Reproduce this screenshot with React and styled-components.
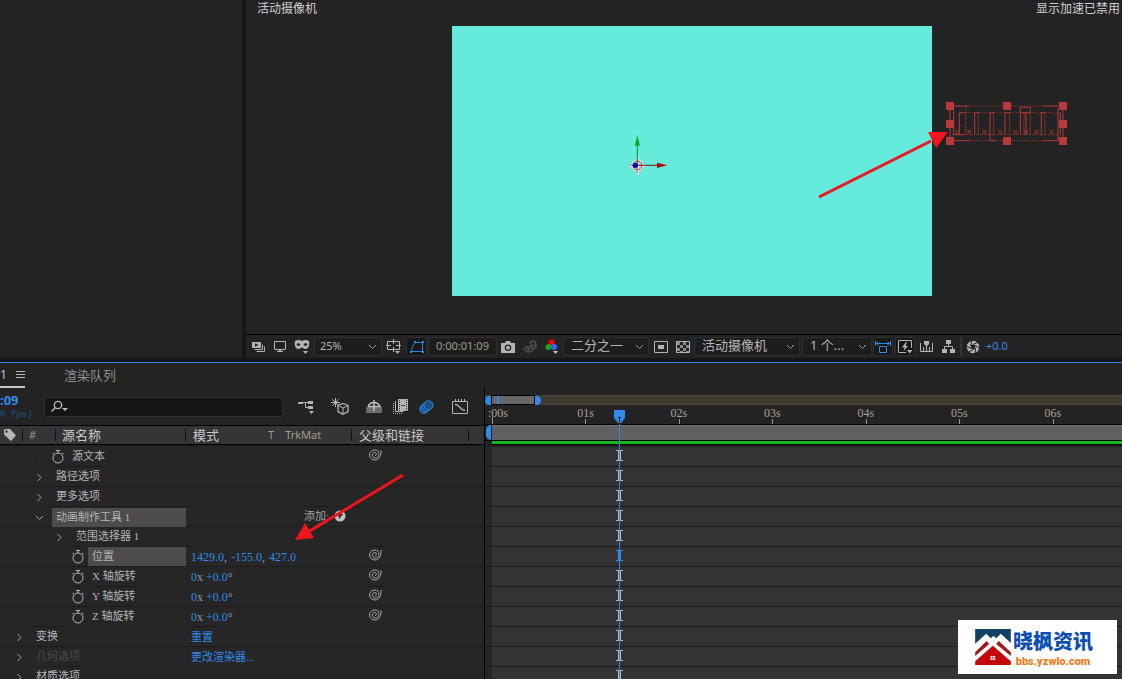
import React, { useState } from 'react';
import styled, { createGlobalStyle } from 'styled-components';

const DURATION = 6.74; // seconds visible in the timeline
const CURRENT_TIME = 1.36;

const GlobalStyle = createGlobalStyle`
* { box-sizing: border-box; }
body {
    margin: 0;
    background: #161616;
    color: #c4c4c4;
    font-family: "Noto Sans", "Noto Sans CJK SC", sans-serif;
    font-size: 12px;
}
button, input, select {
    font: inherit;
    color: inherit;
    margin: 0;
    padding: 0;
    border: 0;
    background: none;
}
svg { display: block; flex: none; }
`

const Window = styled.div`
position: relative;
height: 100vh;
overflow: hidden;
display: flex;
flex-direction: column;
`

/* ---------- upper area ---------- */

const Upper = styled.div`
display: flex;
gap: 4px;
padding-bottom: 4px;
`

const ProjectPanel = styled.section`
width: 242px;
flex: none;
background: #232323;
`

const ViewerPanel = styled.section`
flex: 1;
min-width: 0;
background: #232323;
`

const ViewerHead = styled.header`
display: flex;
justify-content: space-between;
height: 26px;
padding: 0 2px 0 11px;
line-height: 18px;
color: #d0d0d0;
`

const Stage = styled.div`
position: relative;
padding: 0 0 38px 206px;
border-bottom: 1px solid #000;
`

const Composition = styled.div`
width: 480px;
height: 270px;
background: #66eadb;
`

const Gizmo = styled.svg`
position: absolute;
left: 354px;
top: 94px;
`

const TextSelection = styled.svg`
position: absolute;
left: 684px;
top: 59px;
`

const ViewerBar = styled.div`
display: flex;
align-items: center;
height: 23px;
padding-left: 2px;
color: #b4b4b4;
`

const BarButton = styled.button`
display: flex;
align-items: center;
justify-content: center;
flex: none;
width: ${props => props.$w || 22}px;
height: 19px;
margin-left: ${props => props.$gap || 0}px;
border-radius: 3px;
background: ${props => props.$boxed ? '#171717' : 'none'};
border: ${props => props.$boxed ? '1px solid #303030' : '0'};
color: ${props => props.$on ? '#2d8ceb' : '#b4b4b4'};
opacity: ${props => props.$dim ? 0.3 : 1};
`

const SelectBox = styled.label`
position: relative;
display: flex;
align-items: center;
flex: none;
width: ${props => props.$w}px;
height: 19px;
margin-left: ${props => props.$gap || 0}px;
background: #1d1d1d;
border: 1px solid #303030;
border-radius: 3px;

select {
    width: 100%;
    padding-left: ${props => props.$small ? 5 : 7}px;
    padding-bottom: 2px;
    appearance: none;
    outline: none;
    font-size: ${props => props.$small ? 11 : 13}px;
    line-height: 15px;
}
svg {
    position: absolute;
    right: 4px;
    pointer-events: none;
}
`

const TimeButton = styled(BarButton)`
padding-bottom: 2px;
background: #1d1d1d;
border: 1px solid #303030;
color: #a09a92;
font-size: 11px;
`

const Separator = styled.span`
width: 2px;
height: 19px;
margin-left: 2px;
background: #353535;
`

const Exposure = styled.button`
color: #2d8ceb;
font-size: 11px;
padding: 0 0 2px 2px;
`

/* ---------- timeline ---------- */

const Timeline = styled.section`
flex: 1;
min-height: 0;
display: flex;
flex-direction: column;
border-top: 1px solid #2d8ceb;
background: #232323;
`

const Tabs = styled.nav`
display: flex;
height: 25px;
`

const ActiveTab = styled.div`
display: flex;
align-items: center;
gap: 9px;
width: 25px;
border-bottom: 2px solid #c8c8c8;
font-size: 12px;
`

const Tab = styled.button`
margin-left: 39px;
padding-bottom: 3px;
color: #8e8e8e;
font-size: 13px;
`

const TimelineBody = styled.div`
flex: 1;
min-height: 0;
display: grid;
grid-template-columns: 485px 1fr;
`

const LayersPane = styled.div`
border-right: 1px solid #000;
overflow: hidden;
`

const ToolRow = styled.div`
display: flex;
align-items: center;
height: 37px;
`

const CurrentTime = styled.div`
width: 44px;
flex: none;
color: #2d8ceb;
font-size: 13px;
font-weight: 700;
line-height: 16px;

small {
    display: block;
    color: #1c548a;
    font-family: "Liberation Mono", monospace;
    font-size: 9px;
    font-weight: 400;
    line-height: 14px;
    white-space: nowrap;
}
`

const Search = styled.label`
display: flex;
align-items: center;
width: 239px;
height: 20px;
padding-left: 6px;
background: #161616;
border: 1px solid #303030;
border-radius: 3px;

input {
    flex: 1;
    min-width: 0;
    padding-left: 6px;
    outline: none;
}
`

const columns = `186px 165px 1fr`

const ColumnHead = styled.div`
display: grid;
grid-template-columns: 23px 33px 130px 166px 117px 1fr;
align-items: center;
height: 20px;
background: #353535;
border-top: 1px solid #000;
border-bottom: 1px solid #000;
font-size: 13px;
color: #c8c8c8;
`

const HeadCell = styled.div`
display: flex;
align-items: center;
height: 12px;
padding-left: ${props => props.$pad || 7}px;
border-right: 1px solid #111;
line-height: 12px;
white-space: nowrap;

small {
    font-size: 11px;
    color: #a39b92;
}
`

const ModeT = styled.small`
margin-left: 49px;
margin-right: 11px;
`

const Rows = styled.div`
padding-top: 1px;
border-top: 1px solid #1c1c1c;
background: #262626;
`

const Row = styled.div`
display: grid;
grid-template-columns: ${columns};
height: 20px;
border-bottom: 1px solid #1c1c1c;
`

const NameCell = styled.div`
display: flex;
align-items: center;
gap: 4px;
padding-left: ${props => props.$level * 20 + 8}px;
`

const Twirl = styled.button`
display: flex;
align-items: center;
justify-content: center;
width: 20px;
height: 19px;
padding: 2px 0 0 2px;
flex: none;
color: #a8a8a8;
`

const NoTwirl = styled.span`
display: flex;
justify-content: center;
width: 20px;
padding-left: 2px;
color: #454545;
font-size: 11px;
`

const IconButton = styled.button`
color: #b4b4b4;
display: flex;
flex: none;
`

const LayerName = styled.span`
flex: 1;
height: 19px;
padding-left: 4px;
font-family: "Liberation Serif", "Noto Sans CJK SC", serif;
font-size: 11px;
line-height: 18px;
white-space: nowrap;
background: ${props => props.$selected ? '#4c4c4c' : 'none'};
color: ${props => props.$dim ? '#4c4c4c' : '#b4b4b4'};
`

const ValueCell = styled.div`
display: flex;
align-items: center;
padding: 1px 0 0 5px;
font-family: "Liberation Serif", "Noto Sans CJK SC", serif;
font-size: 12px;
line-height: 16px;
color: #999;
white-space: nowrap;
`

const Value = styled.button`
color: #2d8ceb;
`

const Comma = styled.span`
width: 7px;
`

const TextLink = styled.a`
color: #2d8ceb;
font-size: 11px;
text-decoration: none;
`

const AddMenu = styled.button`
display: flex;
align-items: center;
gap: 5px;
margin-left: auto;
padding-right: 5px;
padding-bottom: 3px;
color: #a0a0a0;
font-size: 11px;
`

const ParentCell = styled.div`
display: flex;
align-items: center;
padding: 0 0 4px 18px;
`

/* right part: time ruler and tracks */

const TracksPane = styled.div`
position: relative;
min-width: 0;
padding-top: 7px;
overflow: hidden;
`

const Navigator = styled.div`
display: flex;
height: 10px;
background: #423c34;
border-top: 1px solid #4a4438;
border-bottom: 1px solid #4a4438;
`

const NavHandle = styled.span`
width: 6px;
height: 9px;
background: #2d8ceb;
border-radius: ${props => props.$end ? '0 5px 5px 0' : '5px 0 0 5px'};
`

const NavRange = styled.div`
width: 44px;
height: 10px;
margin-top: -1px;
padding-left: 5px;
background: #686868;
border: 1px solid #000;

span {
    display: block;
    width: 2px;
    height: 8px;
    background: #2d8ceb;
}
`

const Ruler = styled.div`
display: grid;
grid-template-columns: repeat(6, 1fr) 0.74fr;
height: 19px;
margin-left: 7px;
`

const RulerMark = styled.div`
display: flex;
flex-direction: column;
justify-content: space-between;
min-width: 0;

span {
    height: 12px;
    width: 30px;
    margin-left: ${props => props.$first ? -4 : -15}px;
    text-align: ${props => props.$first ? 'left' : 'center'};
    font-family: "Liberation Serif", serif;
    font-size: 12px;
    line-height: 16px;
    color: #a8a29a;
}
i {
    width: 1px;
    height: ${props => props.$first ? 7 : 5}px;
    background: #999;
}
`

const WorkArea = styled.div`
display: flex;
height: 17px;
border-top: 1px solid #000;
border-bottom: 1px solid #000;

b {
    width: 5px;
    margin: 0 1px;
    background: #2d8ceb;
    border-radius: 5px 0 0 5px;
}
div {
    flex: 1;
    background: #606060;
    border-top: 1px solid #757575;
}
`

const CacheLine = styled.div`
height: 4px;
margin-left: 7px;
background: #14b91f;
border-bottom: 1px solid #000;
`

const Tracks = styled.div`
padding-top: 1px;
border-top: 1px solid #1c1c1c;
`

const Track = styled.div`
height: 20px;
padding-left: 7px;
background: #262626;
border-bottom: 1px solid #1c1c1c;
color: ${props => props.$on ? '#2d8ceb' : '#b8b8b8'};
`

const Lane = styled.div`
height: 19px;
padding-top: 3px;
background: #333;

svg {
    margin-left: -3px;
}
`

const PlayheadLane = styled.div`
position: absolute;
top: 22px;
bottom: 0;
left: 7px;
right: 0;
pointer-events: none;
`

const Playhead = styled.div`
position: absolute;
top: 0;
bottom: 0;
width: 1px;
background: #2d8ceb;

svg {
    margin-left: -5px;
}
`

/* ---------- overlays ---------- */

const Annotation = styled.svg`
position: absolute;
left: ${props => props.$x}px;
top: ${props => props.$y}px;
pointer-events: none;
`

const Watermark = styled.a`
position: absolute;
right: 5px;
bottom: 5px;
display: flex;
align-items: center;
gap: 2px;
width: 159px;
height: 54px;
padding-left: 17px;
background: #fff;
text-decoration: none;
`

const WatermarkText = styled.span`
display: flex;
flex-direction: column;
align-items: center;
font-family: "Noto Sans CJK SC", sans-serif;
font-size: 20px;
font-weight: 900;
line-height: 29px;
color: #0c4eb0;
white-space: nowrap;

small {
    font-family: Roboto, sans-serif;
    font-size: 11px;
    font-weight: 900;
    line-height: 13px;
    color: #ef7d22;
}
`

/* ---------- icons ---------- */

const ChevronDown = () => (
    <svg width="9" height="6" viewBox="0 0 9 6" fill="none" stroke="#999"><path d="M1 1l3.500 3.500L8 1" /></svg>
)

const PreviewIcon = () => (
    <svg width="14" height="12" viewBox="0 0 14 12">
        <path fill="currentColor" fillRule="evenodd" d="M0 1h9v6H0zM3 2.200v3.600L6.500 4z" />
        <path fill="none" stroke="currentColor" d="M2.500 8.500h8v-5M4.500 10.500h8v-5" />
    </svg>
)

const MonitorIcon = () => (
    <svg width="12" height="12" viewBox="0 0 12 12">
        <path d="M.5.5h11v8H.5z" fill="none" stroke="currentColor" />
        <path fill="currentColor" d="M5 8h2v2h2v1H3v-1h2z" />
    </svg>
)

const MaskIcon = () => (
    <svg width="16" height="16" viewBox="0 0 16 16">
        <path fill="currentColor" fillRule="evenodd" d="M1 2c3-1.500 4.500-1 7 0 2.500-1 4-1.500 7 0 .8 3 0 8-3.500 8C9.500 10 9 8.500 8 8.500S6.500 10 4.500 10C1 10 .2 5 1 2zm1.500 3.500c.5 1.800 3 1.800 4 .3C6 3.800 3 3.500 2.500 5.500zm7 .3c1 1.500 3.500 1.500 4-.3-.5-2-3.500-1.700-4 .3z" />
        <path fill="currentColor" d="M9 12h5l-2.500 3z" />
    </svg>
)

const GridIcon = () => (
    <svg width="16" height="16" viewBox="0 0 16 16">
        <path fill="none" stroke="currentColor" d="M1.500 2.500h12v8h-12zM7.500 0v5M7.500 8v5M0 6.500h5M10 6.500h5" />
        <path fill="#232323" d="M8 11h7v5H8z" />
        <path fill="currentColor" d="M9 12h5l-2.500 3z" />
    </svg>
)

const ShapeIcon = () => (
    <svg width="16" height="14" viewBox="0 0 16 14">
        <path fill="none" stroke="currentColor" d="M2.500 11.500C3 7 4.500 5 6.500 2.500h7v9z" />
        <path fill="currentColor" d="M1 11h2v2H1zM5 1h2v2H5zM13 1h2v2h-2zM13 11h2v2h-2z" />
    </svg>
)

const CameraIcon = () => (
    <svg width="14" height="12" viewBox="0 0 14 12">
        <path fill="currentColor" fillRule="evenodd" d="M0 2h4l1-2h4l1 2h4v10H0zm7 1.500a3.300 3.300 0 1 0 0 6.600 3.300 3.300 0 0 0 0-6.600z" />
        <circle cx="7" cy="6.800" r="2" fill="currentColor" />
    </svg>
)

const SnapshotIcon = () => (
    <svg width="14" height="14" viewBox="0 0 14 14" fill="none" stroke="currentColor" strokeWidth="1.500">
        <path d="M1 9c2-3.500 7-3.500 9 0-2 4-7 4-9 0z" />
        <circle cx="10" cy="3.500" r="2.500" />
        <circle cx="5.500" cy="9" r="1" />
        <path d="M13 4c.5 3-1 5-3 5" />
    </svg>
)

const RgbIcon = () => (
    <svg width="14" height="15" viewBox="0 0 14 15">
        <circle cx="6.500" cy="3.500" r="3" fill="#fb0007" />
        <circle cx="3.500" cy="8" r="3" fill="#14a514" />
        <circle cx="9" cy="8" r="3" fill="#3a62fb" />
        <path fill="#c8c8c8" d="M8 12h5l-2.500 3z" />
    </svg>
)

const TargetIcon = () => (
    <svg width="14" height="12" viewBox="0 0 14 12">
        <path fill="none" stroke="currentColor" d="M.5.5h13v11H.5z" />
        <path fill="currentColor" d="M4 4h6v4H4z" />
    </svg>
)

const CheckerIcon = () => (
    <svg width="14" height="12" viewBox="0 0 14 12">
        <path fill="none" stroke="currentColor" d="M.5.5h13v11H.5z" />
        <path fill="#8a8a8a" d="M1 1h3v3H1zM7 1h3v3H7zM4 4h3v3H4zM10 4h3v3h-3zM1 7h3v3H1zM7 7h3v3H7zM4 10h3v1H4zM10 10h3v1h-3z" />
    </svg>
)

const AspectIcon = () => (
    <svg width="16" height="14" viewBox="0 0 16 14">
        <path fill="none" stroke="currentColor" d="M1 3.500h14M4.500 6.500h7v6h-7zM.5 1v5M15.500 1v5" />
        <path fill="currentColor" d="M1 3.500L3.500 1.500v4zM15 3.500l-2.500-2v4z" />
    </svg>
)

const FastPreviewIcon = () => (
    <svg width="15" height="14" viewBox="0 0 15 14">
        <path fill="none" stroke="currentColor" d="M8 12.500H.5V.500h13V8" />
        <path fill="currentColor" d="M8 2L4 7.500h2.500L5.500 11 10 6H7.500L9 2zM9 10h5.500l-2.700 3.500z" />
    </svg>
)

const TimelineIcon = () => (
    <svg width="14" height="12" viewBox="0 0 14 12">
        <path fill="none" stroke="currentColor" d="M.5 2v8.500h12V2M3.500 6v4M9.500 6v4M6.500 4v6" />
        <path fill="currentColor" d="M4 0h5v3L6.500 5.500 4 3z" />
    </svg>
)

const FlowchartIcon = () => (
    <svg width="13" height="13" viewBox="0 0 13 13">
        <path fill="currentColor" d="M4 0h5v4H4zM0 9h5v4H0zM8 9h5v4H8z" />
        <path fill="none" stroke="currentColor" d="M6.500 4v3M2.500 9V6.500h8V9" />
    </svg>
)

const ShutterIcon = () => (
    <svg width="14" height="14" viewBox="0 0 14 14">
        <circle cx="7" cy="7" r="4.300" fill="none" stroke="currentColor" strokeWidth="3.800" />
        <path stroke="#232323" d="M6 0L4.500 6M12.500 2L7 4.500M14 8L9 5.500M9 14l.5-6M2 12.500L7.500 9.500M0 5.500l4.800 3" />
    </svg>
)

const SearchIcon = () => (
    <svg width="17" height="13" viewBox="0 0 17 13">
        <circle cx="7" cy="5" r="3.700" fill="none" stroke="#bbb" strokeWidth="1.300" />
        <path stroke="#bbb" strokeWidth="1.500" d="M4.500 7.500L.5 11.500" />
        <path fill="#bbb" d="M11 8h6l-3 3z" />
    </svg>
)

const MiniFlowIcon = () => (
    <svg width="17" height="14" viewBox="0 0 17 14">
        <path fill="currentColor" d="M0 2h5v2H0zM10 1h5v3h-5zM10 6h5v3h-5zM11 11h5l-2.500 3z" />
        <path fill="none" stroke="currentColor" d="M5 2.500h5M7.500 2v5.500H10" />
    </svg>
)

const DraftIcon = () => (
    <svg width="18" height="17" viewBox="0 0 18 17" fill="none" stroke="currentColor">
        <path d="M4.500 0v9M0 4.500h9M1.300 1.300l6.400 6.400M7.700 1.300L1.300 7.700" />
        <path strokeWidth="1.300" fill="#232323" d="M12 5.500l5 2v6l-5 2.800-5-2.800v-6z" />
        <path d="M7 7.500l5 2.500 5-2.500M12 10v6" />
    </svg>
)

const ShyIcon = () => (
    <svg width="16" height="13" viewBox="0 0 16 13">
        <path fill="#6c6c6c" d="M0 7h16v6H0z" />
        <path fill="none" stroke="#c0c0c0" strokeWidth="1.500" d="M2 6.500C4 1 12 1 14 6.500H2M8 0v11" />
    </svg>
)

const FrameBlendIcon = () => (
    <svg width="15" height="15" viewBox="0 0 15 15">
        <path fill="none" stroke="currentColor" strokeDasharray="1 1" d="M.5 4v10.500h9" />
        <path fill="none" stroke="currentColor" d="M2.500 2v10.500h8" />
        <path fill="currentColor" d="M5 0h10v12H5z" />
        <path stroke="#333" strokeDasharray="1 1" d="M6.500 1v11M13.500 1v11" />
        <path stroke="#444" d="M8 6.500h4" />
    </svg>
)

const MotionBlurIcon = () => (
    <svg width="15" height="14" viewBox="0 0 15 14" fill="#1c4f86" stroke="#2d8ceb">
        <circle cx="5" cy="9" r="4.300" />
        <circle cx="7" cy="7.200" r="4.300" />
        <circle cx="9.500" cy="5.200" r="4.500" />
    </svg>
)

const GraphIcon = () => (
    <svg width="16" height="15" viewBox="0 0 16 15" fill="none" stroke="currentColor">
        <path d="M.5 2.500h15v12H.5zM3.500 0v2M6.500 0v2M9.500 0v2M12.500 0v2" />
        <path strokeWidth="1.300" d="M3 5.500c3 0 3.500 1 5 3s2.500 3 5 3" />
    </svg>
)

const TagIcon = () => (
    <svg width="12" height="12" viewBox="0 0 12 12">
        <path fill="#b8b8b8" fillRule="evenodd" d="M0 1l1-1h5l6 6.500L7 12 0 5.500zm2.500.3a1.200 1.200 0 1 0 0 2.400 1.200 1.200 0 0 0 0-2.400z" />
    </svg>
)

const StopwatchIcon = () => (
    <svg width="12" height="14" viewBox="0 0 12 14" fill="none" stroke="currentColor">
        <circle cx="6" cy="8" r="5" />
        <path d="M4 .5h4M6 1v2M10 3l1.500 1M2 3L.5 4" />
    </svg>
)

const SpiralIcon = () => (
    <svg width="13" height="12" viewBox="0 0 13 12" fill="none" stroke="#a8a8a8">
        <path d="M12 1c.5 5-1.500 10-6 10C3 11 .5 9 .5 6S3 1 6 1c2.500 0 4 1.500 4 3.700 0 2.500-1.500 4.300-3.700 4.300C4.500 9 3.300 7.800 3.300 6.200c0-1.500 1-2.700 2.500-2.700 1.200 0 1.700.8 1.700 1.600 0 .9-.6 1.400-1.500 1.400" />
    </svg>
)

const TwirlIcon = ({ open }) => open
    ? <svg width="9" height="6" viewBox="0 0 9 6" fill="none" stroke="currentColor"><path d="M1 1l3.500 3.500L8 1" /></svg>
    : <svg width="6" height="9" viewBox="0 0 6 9" fill="none" stroke="currentColor"><path d="M1.500 1L5 4.500 1.500 8" /></svg>

const AddIcon = () => (
    <svg width="12" height="12" viewBox="0 0 12 12">
        <circle cx="6" cy="6" r="5.500" fill="#c0c0c0" />
        <path fill="#262626" d="M4 3l5 1-4 5z" />
    </svg>
)

const BeamIcon = () => (
    <svg width="7" height="11" viewBox="0 0 7 11" fill="currentColor">
        <path d="M0 0h7v1H0zM0 10h7v1H0zM2 0h3v11H2z" />
    </svg>
)

const LogoMark = () => (
    <svg width="36" height="36" viewBox="90 87 107 108">
        <path fill="#114264" d="M90 87h107v42l-30-28-14 14-8-8-8 8-14-14-33 30z" />
        <path fill="#9c1a1f" d="M90 157l34-34 8 9-42 36zM197 157l-36-34-8 9 44 36z" />
        <path fill="#c4070b" d="M90 184l53-47 54 47v11H90z" />
        <path fill="#fff" d="M136 168h14v12h-14z" />
        <path stroke="#c4070b" strokeWidth="2" d="M143 168v12M136 174h14" />
    </svg>
)

/* ---------- data ---------- */

const LAYER_ROWS = [
    { name: '源文本', level: 1, stopwatch: true, pick: true },
    { name: '路径选项', level: 1 },
    { name: '更多选项', level: 1 },
    { name: '动画制作工具 1', level: 1, open: true, selected: true, add: true },
    { name: '范围选择器 1', level: 2 },
    { name: '位置', level: 2, stopwatch: true, pick: true, selected: true, values: ['1429.0', '-155.0', '427.0'] },
    { name: 'X 轴旋转', level: 2, stopwatch: true, pick: true, rotation: true },
    { name: 'Y 轴旋转', level: 2, stopwatch: true, pick: true, rotation: true },
    { name: 'Z 轴旋转', level: 2, stopwatch: true, pick: true, rotation: true },
    { name: '变换', level: 0, link: '重置' },
    { name: '几何选项', level: 0, dim: true, link: '更改渲染器...' },
    { name: '材质选项', level: 0 },
]

const Dropdown = ({ label, value, w, gap, small }) => (
    <SelectBox $w={w} $gap={gap} $small={small}>
        <select aria-label={label} defaultValue={value}>
            <option>{value}</option>
        </select>
        <ChevronDown />
    </SelectBox>
)

function Viewer() {
    return (
        <ViewerPanel>
            <ViewerHead>
                <span>活动摄像机</span>
                <span>显示加速已禁用</span>
            </ViewerHead>
            <Stage>
                <Composition />
                <Gizmo width="90" height="70" viewBox="0 0 270 210">
                    <path fill="none" stroke="#f4ece8" strokeWidth="6" d="M114 110v54M88 138h48" />
                    <circle cx="112" cy="136" r="14" fill="none" stroke="#e9dcd8" strokeWidth="7" />
                    <circle cx="112" cy="136" r="13" fill="none" stroke="#b8484a" strokeWidth="3" />
                    <path stroke="#b8484a" strokeWidth="2" d="M112 112v48M88 136h20" />
                    <path stroke="#0b8f1c" strokeWidth="3" d="M112 76v58" />
                    <path fill="#0ab01a" d="M112 46l8 31h-16z" />
                    <path stroke="#7d1414" strokeWidth="3" d="M112 136h60" />
                    <path fill="#b00808" d="M202 136l-31-8v16z" />
                    <circle cx="106" cy="136" r="8" fill="#0a0ab4" />
                </Gizmo>
                <TextSelection width="160" height="75" viewBox="0 0 480 225" fill="none" stroke="#b53a3a" strokeWidth="3">
                    <path d="M60 63h58M338 63h62M60 167h60M338 167h62M60 63v104M399 63v104" />
                    <path stroke="#963434" strokeDasharray="3 3" d="M118 63h220M120 167h218M90 83h306M60 149h338" />
                    <path d="M71 76v73h35M88 149V83h14M134 149V83h12M180 83v84h16M180 83h12M225 149V83h14M271 83V67h30v16h-30v66M288 83v66M334 149V83h12M384 70v95M391 83v66" />
                    <path strokeDasharray="3 2" d="M107 66v83M145 83v66M191 83v66M239 83v66M282 83v66M301 83v66M345 83v66" />
                    <path stroke="#a83737" strokeWidth="3" d="M76 134l13 13m0-13l-13 13M111 134l13 13m0-13l-13 13M157 134l13 13m0-13l-13 13M205 134l13 13m0-13l-13 13M250 134l13 13m0-13l-13 13M282 134l13 13m0-13l-13 13M313 134l13 13m0-13l-13 13M358 134l13 13m0-13l-13 13" />
                    <g fill="#b93a3a" stroke="none">
                        <path d="M48 51h24v24H48zM219 51h24v24h-24zM387 51h24v24h-24zM48 105h24v24H48zM387 105h24v24h-24zM48 156h24v24H48zM219 156h24v24h-24zM387 156h24v24h-24z" />
                    </g>
                </TextSelection>
            </Stage>
            <ViewerBar>
                <BarButton aria-label="始终预览"><PreviewIcon /></BarButton>
                <BarButton $w={20} aria-label="主查看器"><MonitorIcon /></BarButton>
                <BarButton $w={24} aria-label="立体眼镜"><MaskIcon /></BarButton>
                <Dropdown label="放大率" value="25%" w={68} small />
                <BarButton $w={24} aria-label="网格"><GridIcon /></BarButton>
                <BarButton $w={21} $boxed $on aria-label="蒙版可见性"><ShapeIcon /></BarButton>
                <TimeButton $w={69} $gap={1}>0:00:01:09</TimeButton>
                <BarButton aria-label="拍摄快照"><CameraIcon /></BarButton>
                <BarButton $dim aria-label="显示快照"><SnapshotIcon /></BarButton>
                <BarButton aria-label="通道"><RgbIcon /></BarButton>
                <Dropdown label="分辨率" value="二分之一" w={86} />
                <BarButton $w={24} aria-label="目标区域"><TargetIcon /></BarButton>
                <BarButton $w={20} aria-label="透明网格"><CheckerIcon /></BarButton>
                <Dropdown label="3D 视图" value="活动摄像机" w={106} gap={1} />
                <Dropdown label="视图布局" value="1 个..." w={70} gap={2} />
                <BarButton $w={20} $gap={1} $boxed $on aria-label="像素长宽比"><AspectIcon /></BarButton>
                <BarButton $w={20} $gap={2} $boxed aria-label="快速预览"><FastPreviewIcon /></BarButton>
                <BarButton $gap={1} aria-label="时间轴"><TimelineIcon /></BarButton>
                <BarButton $w={20} aria-label="流程图"><FlowchartIcon /></BarButton>
                <Separator />
                <BarButton aria-label="重置曝光度"><ShutterIcon /></BarButton>
                <Exposure>+0.0</Exposure>
            </ViewerBar>
        </ViewerPanel>
    )
}

function LayerRow({ row }) {
    const [open, setOpen] = useState(!!row.open)

    return (
        <Row>
            <NameCell $level={row.level}>
                {row.stopwatch ? (
                    <>
                        <NoTwirl>·</NoTwirl>
                        <IconButton aria-label={`${row.name} 关键帧`}><StopwatchIcon /></IconButton>
                    </>
                ) : (
                    <Twirl aria-label={row.name} aria-expanded={open} onClick={() => setOpen(!open)}>
                        <TwirlIcon open={open} />
                    </Twirl>
                )}
                <LayerName $selected={row.selected} $dim={row.dim}>{row.name}</LayerName>
            </NameCell>
            <ValueCell>
                {row.values && row.values.map((value, index) => (
                    <React.Fragment key={value}>
                        {index > 0 && <Comma>,</Comma>}
                        <Value>{value}</Value>
                    </React.Fragment>
                ))}
                {row.rotation && <><Value>0</Value>x&nbsp;<Value>+0.0</Value>°</>}
                {row.link && <TextLink href="#">{row.link}</TextLink>}
                {row.add && <AddMenu>添加: <AddIcon /></AddMenu>}
            </ValueCell>
            <ParentCell>
                {row.pick && <IconButton aria-label={`${row.name} 关联器`}><SpiralIcon /></IconButton>}
            </ParentCell>
        </Row>
    )
}

export default function App() {
    const offset = `${CURRENT_TIME / DURATION * 100}%`

    return (
        <>
            <GlobalStyle />
            <Window>
                <Upper>
                    <ProjectPanel />
                    <Viewer />
                </Upper>
                <Timeline>
                    <Tabs>
                        <ActiveTab>
                            1
                            <svg width="9" height="9" viewBox="0 0 9 9" stroke="#b8b8b8"><path d="M0 1.500h9M0 4.500h9M0 7.500h9" /></svg>
                        </ActiveTab>
                        <Tab>渲染队列</Tab>
                    </Tabs>
                    <TimelineBody>
                        <LayersPane>
                            <ToolRow>
                                <CurrentTime>:09<small>0 fps)</small></CurrentTime>
                                <Search>
                                    <SearchIcon />
                                    <input type="text" aria-label="搜索" />
                                </Search>
                                <BarButton $w={17} $gap={15} aria-label="合成微型流程图"><MiniFlowIcon /></BarButton>
                                <BarButton $w={18} $gap={16} aria-label="草图 3D"><DraftIcon /></BarButton>
                                <BarButton $w={16} $gap={17} aria-label="隐藏图层"><ShyIcon /></BarButton>
                                <BarButton $w={15} $gap={11} aria-label="帧混合"><FrameBlendIcon /></BarButton>
                                <BarButton $w={15} $gap={11} aria-label="运动模糊"><MotionBlurIcon /></BarButton>
                                <BarButton $w={16} $gap={18} aria-label="图表编辑器"><GraphIcon /></BarButton>
                            </ToolRow>
                            <ColumnHead>
                                <HeadCell $pad={4}><TagIcon /></HeadCell>
                                <HeadCell $pad={6}><small>#</small></HeadCell>
                                <HeadCell $pad={6}>源名称</HeadCell>
                                <HeadCell>模式<ModeT>T</ModeT><small>TrkMat</small></HeadCell>
                                <HeadCell>父级和链接</HeadCell>
                            </ColumnHead>
                            <Rows>
                                {LAYER_ROWS.map(row => <LayerRow key={row.name} row={row} />)}
                            </Rows>
                        </LayersPane>
                        <TracksPane>
                            <Navigator>
                                <NavHandle />
                                <NavRange><span /></NavRange>
                                <NavHandle $end />
                            </Navigator>
                            <Ruler>
                                {[':00s', '01s', '02s', '03s', '04s', '05s', '06s'].map((label, index) => (
                                    <RulerMark key={label} $first={index === 0}>
                                        <span>{label}</span>
                                        <i />
                                    </RulerMark>
                                ))}
                            </Ruler>
                            <WorkArea><b /><div /></WorkArea>
                            <CacheLine />
                            <Tracks>
                                {LAYER_ROWS.map(row => (
                                    <Track key={row.name} $on={!!row.values}>
                                        <Lane style={{ paddingLeft: offset }}><BeamIcon /></Lane>
                                    </Track>
                                ))}
                            </Tracks>
                            <PlayheadLane>
                                <Playhead style={{ left: offset }}>
                                    <svg width="11" height="14" viewBox="0 0 11 14">
                                        <path fill="#2d8ceb" d="M0 0h11v8l-4 5H4L0 8z" />
                                        <path stroke="#1b2a3a" d="M5.500 7v7M4 7.500h3" />
                                    </svg>
                                </Playhead>
                            </PlayheadLane>
                        </TracksPane>
                    </TimelineBody>
                </Timeline>

                <Annotation $x={815} $y={128} width="136" height="72" viewBox="0 0 136 72">
                    <path stroke="#ee161c" strokeWidth="3" d="M4 69l112-56" />
                    <path fill="#ee161c" d="M133 4l-20 0 8 16z" />
                </Annotation>
                <Annotation $x={290} $y={470} width="116" height="74" viewBox="0 0 116 74">
                    <path stroke="#ee161c" strokeWidth="3" d="M113 5L18 62" />
                    <path fill="#ee161c" d="M5 70l10-17 9 15z" />
                </Annotation>
                <Watermark href="#">
                    <LogoMark />
                    <WatermarkText>晓枫资讯<small>bbs.yzwlo.com</small></WatermarkText>
                </Watermark>
            </Window>
        </>
    )
}
